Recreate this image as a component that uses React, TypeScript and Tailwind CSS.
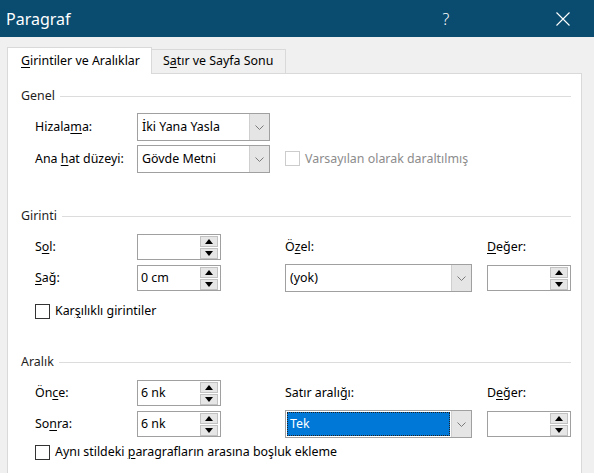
import React from "react";

type SpinProps = { value?: string };

// spinner box with up/down buttons
const Spinner: React.FC<SpinProps> = ({ value }) => (
  <div className="flex h-[26px] w-[84px] items-center border border-[#a0a0a0] bg-white">
    <span className="flex-1 pl-[3px] leading-none">{value}</span>
    <div className="mr-[2px] flex flex-col gap-[1px]">
      <div className="flex h-[11px] w-[18px] items-center justify-center border border-[#c2c2c2] bg-[#e6e6e6]">
        <svg width="8" height="5" viewBox="0 0 8 5">
          <path d="M0 5 L4 0 L8 5 Z" fill="#000" />
        </svg>
      </div>
      <div className="flex h-[11px] w-[18px] items-center justify-center border border-[#c2c2c2] bg-[#e6e6e6]">
        <svg width="8" height="5" viewBox="0 0 8 5">
          <path d="M0 0 L4 5 L8 0 Z" fill="#000" />
        </svg>
      </div>
    </div>
  </div>
);

type DropProps = { value: string; width: string; selected?: boolean };

const Dropdown: React.FC<DropProps> = ({ value, width, selected }) => (
  <div className={`flex h-[28px] items-stretch border border-[#a0a0a0] bg-white ${width}`}>
    {selected ? (
      <span className="m-[1px] flex flex-1 items-center border border-dotted border-[#222] bg-[#0078d7] pl-[2px] text-white">
        {value}
      </span>
    ) : (
      <span className="flex flex-1 items-center pl-[4px]">{value}</span>
    )}
    <div className="flex w-[20px] items-center justify-center border-l border-[#cfcfcf] bg-[#e5e5e5]">
      <svg width="9" height="5" viewBox="0 0 9 5">
        <path d="M0.5 0.5 L4.5 4.5 L8.5 0.5" fill="none" stroke="#7a7a7a" strokeWidth="1" />
      </svg>
    </div>
  </div>
);

const Check: React.FC<{ disabled?: boolean }> = ({ disabled }) => (
  <div
    className={`h-[15px] w-[15px] bg-white border ${
      disabled ? "border-[#cccccc]" : "border-[#333333]"
    }`}
  />
);

const GroupHeader: React.FC<{ title: string }> = ({ title }) => (
  <div className="flex h-[16px] items-center">
    <span className="text-[#1e1e1e]">{title}</span>
    <div className="ml-[5px] h-px flex-1 bg-[#dcdcdc]" />
  </div>
);

const U: React.FC<{ children: React.ReactNode }> = ({ children }) => (
  <span className="underline decoration-1 underline-offset-[2px]">{children}</span>
);

export default function App() {
  return (
    <div
      className="h-[473px] w-[594px] overflow-hidden bg-[#f0f0f0] text-[12.4px] text-black"
      style={{ fontFamily: '"Noto Sans", "Segoe UI", sans-serif' }}
    >
      {/* Title bar */}
      <div className="flex h-[37px] items-center bg-[#0a4c70] pl-[6px] pr-[8px] text-white">
        <span className="text-[16px]">Paragraf</span>
        <div className="ml-auto flex items-center">
          <span className="mr-[71px] flex w-[46px] justify-center text-[16px] font-light">?</span>
          <span className="flex w-[46px] justify-center">
            <svg width="14" height="14" viewBox="0 0 14 14">
              <path d="M0.5 0.5 L13.5 13.5 M13.5 0.5 L0.5 13.5" stroke="#fff" strokeWidth="1.1" />
            </svg>
          </span>
        </div>
      </div>

      {/* Tabs */}
      <div className="flex h-[36px] items-end pl-[7px]">
        <div className="relative z-10 -mb-px flex h-[27px] w-[145px] items-center border border-b-0 border-[#d9d9d9] bg-white pl-[13px]">
          <span>
            <U>G</U>irintiler ve Aralıklar
          </span>
        </div>
        <div className="flex h-[24px] w-[134px] items-center border border-b-0 border-l-0 border-[#d9d9d9] bg-[#f0f0f0] pl-[11px]">
          <span>
            S<U>a</U>tır ve Sayfa Sonu
          </span>
        </div>
      </div>

      {/* Panel */}
      <div className="ml-[7px] h-[420px] w-[575px] border border-[#d9d9d9] bg-white pl-[13px] pr-[10px] pt-[14px]">
        {/* Genel */}
        <GroupHeader title="Genel" />
        <div className="mt-[9px] flex flex-col gap-[4px] pl-[14px]">
          <div className="grid h-[28px] grid-cols-[102px_148px_1fr] items-center">
            <span>
              Hizala<U>m</U>a:
            </span>
            <Dropdown value="İki Yana Yasla" width="w-[133px]" />
            <span />
          </div>
          <div className="grid h-[28px] grid-cols-[102px_148px_1fr] items-center">
            <span>
              Ana <U>h</U>at düzeyi:
            </span>
            <Dropdown value="Gövde Metni" width="w-[133px]" />
            <div className="flex items-center gap-[5px] text-[#8c8c8c]">
              <Check disabled />
              <span>Varsayılan olarak daraltılmış</span>
            </div>
          </div>
        </div>

        {/* Girinti */}
        <div className="mt-[35px]">
          <GroupHeader title="Girinti" />
        </div>
        <div className="mt-[9px] flex flex-col gap-[3px] pl-[14px]">
          <div className="grid h-[28px] grid-cols-[102px_148px_202px_1fr] items-center">
            <span>
              S<U>o</U>l:
            </span>
            <Spinner />
            <span>
              Ö<U>z</U>el:
            </span>
            <span>
              <U>D</U>eğer:
            </span>
          </div>
          <div className="grid h-[28px] grid-cols-[102px_148px_202px_1fr] items-center">
            <span>
              <U>S</U>ağ:
            </span>
            <Spinner value="0 cm" />
            <Dropdown value="(yok)" width="w-[187px]" />
            <Spinner />
          </div>
          <div className="mt-[9px] flex h-[15px] items-center gap-[5px]">
            <Check />
            <span>
              Kar<U>ş</U>ılıklı girintiler
            </span>
          </div>
        </div>

        {/* Aralık */}
        <div className="mt-[35px]">
          <GroupHeader title="Aralık" />
        </div>
        <div className="mt-[9px] flex flex-col gap-[3px] pl-[14px]">
          <div className="grid h-[28px] grid-cols-[102px_148px_202px_1fr] items-center">
            <span>
              Ön<U>c</U>e:
            </span>
            <Spinner value="6 nk" />
            <span>
              Satır aralı<U>ğ</U>ı:
            </span>
            <span>
              D<U>e</U>ğer:
            </span>
          </div>
          <div className="grid h-[28px] grid-cols-[102px_148px_202px_1fr] items-center">
            <span>
              So<U>n</U>ra:
            </span>
            <Spinner value="6 nk" />
            <Dropdown value="Tek" width="w-[187px]" selected />
            <Spinner />
          </div>
          <div className="mt-[4px] flex h-[15px] items-center gap-[5px]">
            <Check />
            <span>
              Aynı stildeki <U>p</U>aragrafların arasına boşluk ekleme
            </span>
          </div>
        </div>
      </div>
    </div>
  );
}
